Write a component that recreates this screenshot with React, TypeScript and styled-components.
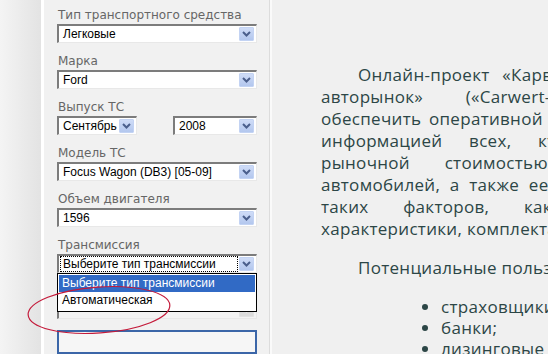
import styled, { createGlobalStyle } from 'styled-components';

const GlobalStyle = createGlobalStyle`
  html, body {
    margin: 0;
    padding: 0;
    background: #f0f0f0;
  }
`;

const Page = styled.div`
  position: relative;
  display: flex;
  width: 548px;
  height: 354px;
  overflow: hidden;
  background: #f0f0f0;
`;

const Gutter = styled.div`
  width: 41px;
  flex-shrink: 0;
  background: linear-gradient(to right, #f4f4f4, #e3e3e3);
  border-right: 3px solid #ffffff;
`;

const Sidebar = styled.aside`
  width: 212px;
  flex-shrink: 0;
  padding: 8px 0 0 13px;
  background: #f1f1f1;
  border-right: 1px solid #dcdcdc;
  display: flex;
  flex-direction: column;
  gap: 11px;
`;

const Field = styled.div`
  position: relative;
  display: flex;
  flex-direction: column;
  gap: 1px;
  width: 200px;
`;

const Label = styled.label`
  height: 15px;
  font-family: 'DejaVu Sans', Verdana, sans-serif;
  font-size: 12px;
  line-height: 15px;
  color: #666666;
  padding-left: 1px;
`;

const SelectRow = styled.div`
  display: flex;
  justify-content: space-between;
`;

const SelectBox = styled.div<{ $width?: number; $disabled?: boolean }>`
  box-sizing: border-box;
  width: ${({ $width }) => ($width ? `${$width}px` : '100%')};
  height: 19px;
  display: flex;
  align-items: center;
  justify-content: space-between;
  padding: 0 2px;
  background: ${({ $disabled }) => ($disabled ? '#f3f3f3' : '#ffffff')};
  border-top: 2px solid #7c7c7c;
  border-left: 2px solid #7c7c7c;
  border-right: 1px solid #e8e8e8;
  border-bottom: 1px solid #e8e8e8;
  font-family: 'Liberation Sans', Arial, sans-serif;
  font-size: 12px;
  color: #000;
`;

const SelectText = styled.span<{ $focused?: boolean }>`
  flex: 1;
  padding: 0 2px;
  line-height: 14px;
  margin-right: 2px;
  outline: ${({ $focused }) => ($focused ? '1px dotted #000' : 'none')};
  white-space: nowrap;
  overflow: hidden;
`;

const ArrowButton = styled.span<{ $disabled?: boolean }>`
  width: 15px;
  height: 14px;
  flex-shrink: 0;
  display: flex;
  align-items: center;
  justify-content: center;
  background: ${({ $disabled }) =>
    $disabled ? '#dcdcdc' : 'linear-gradient(#cfdcf7, #b3c7ee)'};
  border: 1px solid ${({ $disabled }) => ($disabled ? '#e2e2e2' : '#c3d3f3')};
  box-sizing: border-box;
  border-radius: 1px;
`;

const DropList = styled.ul`
  position: absolute;
  top: 35px;
  left: 0;
  z-index: 2;
  box-sizing: border-box;
  width: 200px;
  height: 39px;
  margin: 0;
  padding: 1px;
  list-style: none;
  background: #ffffff;
  border: 1px solid #000000;
  font-family: 'Liberation Sans', Arial, sans-serif;
  font-size: 12px;
`;

const DropItem = styled.li<{ $active?: boolean }>`
  height: 17px;
  line-height: 17px;
  padding-left: 3px;
  background: ${({ $active }) => ($active ? '#316ac5' : 'transparent')};
  color: ${({ $active }) => ($active ? '#ffffff' : '#000000')};
`;

const BlueBox = styled.div`
  box-sizing: border-box;
  width: 200px;
  height: 24px;
  border: 2px solid #3b66a8;
  background: #f6f6f6;
`;

const Main = styled.main`
  flex: 1;
  min-width: 0;
  padding: 64px 0 0 49px;
  border-left: 2px solid #fafafa;
  background: #f0f0f0;
  font-family: 'Open Sans', 'Noto Sans', sans-serif;
  font-size: 17px;
  letter-spacing: 0.3px;
  color: #2c4646;
  overflow: hidden;
`;

const Paragraph = styled.div`
  margin-bottom: 17px;
`;

const Line = styled.div<{ $spread: number; $indent?: boolean }>`
  height: 22px;
  line-height: 22px;
  white-space: nowrap;
  word-spacing: ${({ $spread }) => `${$spread}px`};
  padding-left: ${({ $indent }) => ($indent ? '37px' : '0')};
`;

const List = styled.ul`
  margin: 15px 0 0;
  padding-left: 120px;
  line-height: 21px;
  white-space: nowrap;
`;

const Annotation = styled.svg`
  position: absolute;
  left: 20px;
  top: 278px;
  z-index: 3;
  pointer-events: none;
`;

const Chevron = ({ color }: { color: string }) => (
  <svg width="9" height="6" viewBox="0 0 9 6">
    <path d="M1 1 L4.5 4.5 L8 1" fill="none" stroke={color} strokeWidth="2" />
  </svg>
);

const Select = ({
  value,
  width,
  focused,
  disabled,
}: {
  value: string;
  width?: number;
  focused?: boolean;
  disabled?: boolean;
}) => (
  <SelectBox $width={width} $disabled={disabled}>
    <SelectText $focused={focused}>{value}</SelectText>
    <ArrowButton $disabled={disabled}>
      <Chevron color={disabled ? '#f0f0f0' : '#4b5f8c'} />
    </ArrowButton>
  </SelectBox>
);

// justified lines of the article, spread = extra word spacing of that line
const textLines = [
  { text: 'Онлайн-проект «Карвертер — онлайн', spread: 8, indent: true },
  { text: 'авторынок» («Carwert-market») призван', spread: 38 },
  { text: 'обеспечить оперативной и достоверной', spread: 3 },
  { text: 'информацией всех, кто интересуется', spread: 22 },
  { text: 'рыночной стоимостью подержанных', spread: 30 },
  { text: 'автомобилей, а также ее зависимостью от', spread: 5 },
  { text: 'таких факторов, как технические', spread: 30 },
  { text: 'характеристики, комплектация, пробег.', spread: 0 },
];

export default function App() {
  return (
    <>
      <GlobalStyle />
      <Page>
        <Gutter />
        <Sidebar>
          <Field>
            <Label>Тип транспортного средства</Label>
            <Select value="Легковые" />
          </Field>
          <Field>
            <Label>Марка</Label>
            <Select value="Ford" />
          </Field>
          <Field>
            <Label>Выпуск ТС</Label>
            <SelectRow>
              <Select value="Сентябрь" width={80} />
              <Select value="2008" width={84} />
            </SelectRow>
          </Field>
          <Field>
            <Label>Модель ТС</Label>
            <Select value="Focus Wagon (DB3) [05-09]" />
          </Field>
          <Field>
            <Label>Объем двигателя</Label>
            <Select value="1596" />
          </Field>
          <Field>
            <Label>Трансмиссия</Label>
            <Select value="Выберите тип трансмиссии" focused />
            <DropList>
              <DropItem $active>Выберите тип трансмиссии</DropItem>
              <DropItem>Автоматическая</DropItem>
            </DropList>
          </Field>
          <Field>
            <Label />
            <Select value="" disabled />
          </Field>
          <BlueBox />
        </Sidebar>
        <Main>
          <Paragraph>
            {textLines.map((l, i) => (
              <Line key={i} $spread={l.spread} $indent={l.indent}>
                {l.text}
              </Line>
            ))}
          </Paragraph>
          <Paragraph>
            <Line $spread={0} $indent>
              Потенциальные пользователи сервиса:
            </Line>
          </Paragraph>
          <List>
            <li>страховщики;</li>
            <li>банки;</li>
            <li>лизинговые компании;</li>
          </List>
        </Main>
        <Annotation width="160" height="64" viewBox="0 0 160 64">
          <ellipse
            cx="79"
            cy="32"
            rx="71"
            ry="23"
            transform="rotate(-4 79 32)"
            fill="none"
            stroke="#c41a3a"
            strokeWidth="1.2"
          />
        </Annotation>
      </Page>
    </>
  );
}
